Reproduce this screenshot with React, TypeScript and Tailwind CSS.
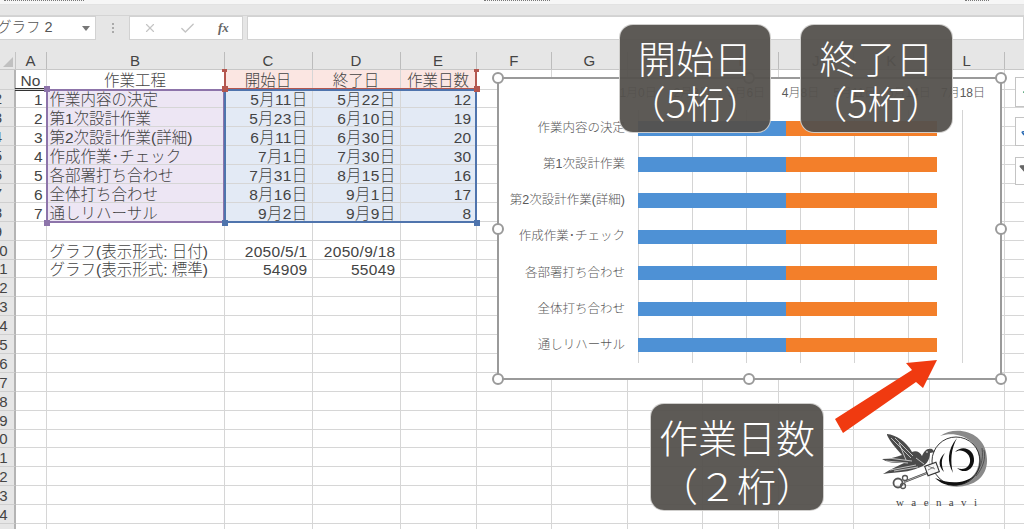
import React from 'react';
import { X, Check, Plus, Paintbrush, Filter } from 'lucide-react';

const colLetters = ['A', 'B', 'C', 'D', 'E', 'F', 'G', 'H', 'I', 'J', 'K', 'L', 'M'];

const rows: { no?: string; name?: string; start?: string; end?: string; days?: string }[] = [
  { no: '1', name: '作業内容の決定', start: '5月11日', end: '5月22日', days: '12' },
  { no: '2', name: '第1次設計作業', start: '5月23日', end: '6月10日', days: '19' },
  { no: '3', name: '第2次設計作業(詳細)', start: '6月11日', end: '6月30日', days: '20' },
  { no: '4', name: '作成作業･チェック', start: '7月1日', end: '7月30日', days: '30' },
  { no: '5', name: '各部署打ち合わせ', start: '7月31日', end: '8月15日', days: '16' },
  { no: '6', name: '全体打ち合わせ', start: '8月16日', end: '9月1日', days: '17' },
  { no: '7', name: '通しリハーサル', start: '9月2日', end: '9月9日', days: '8' },
  {},
  { name: 'グラフ(表示形式: 日付)', start: '2050/5/1', end: '2050/9/18' },
  { name: 'グラフ(表示形式: 標準)', start: '54909', end: '55049' },
];

const emptyRows = Array.from({ length: 14 }, (_, i) => i + 12);
const restCols = [0, 1, 2, 3, 4, 5, 6, 7];

const chartLabels = ['作業内容の決定', '第1次設計作業', '第2次設計作業(詳細)', '作成作業･チェック', '各部署打ち合わせ', '全体打ち合わせ', '通しリハーサル'];
const axisLabels = ['1月0日', '2月3日', '3月6日', '4月8日', '5月11日', '6月14日', '7月18日'];

const rowGrid = 'grid grid-rows-[minmax(0,1fr)] grid-cols-[15.5px_31px_178px_88px_88px_76px_repeat(8,75.5px)]';
const cell = 'min-h-0 border-r border-b border-[#d6d6d6] flex items-center whitespace-nowrap pt-[4px] leading-[16px]';

const RowHead = ({ n }: { n: number }) => (
  <div className="w-[15.5px] min-h-0 bg-[#e6e6e6] border-r-2 border-b border-r-[#b4b4b4] border-b-[#cfcfcf] overflow-hidden flex justify-end items-center pt-[2px] leading-[16px] text-[15px] text-[#444]">
    {n < 10 ? (
      <span className="w-[31px] shrink-0 text-center">{n === 1 ? '' : n}</span>
    ) : (
      <span className="pr-[6px]">{n % 10}</span>
    )}
  </div>
);

const Handle = ({ className }: { className: string }) => (
  <div className={`absolute w-[12px] h-[12px] rounded-full bg-white border-2 border-[#9a9a9a] -translate-x-1/2 -translate-y-1/2 ${className}`} />
);

const Caption = ({ className, lines, size }: { className: string; lines: string[]; size: string }) => (
  <div className={`absolute rounded-[14px] bg-[#54514d]/95 border border-white/70 text-white text-center font-light font-['Noto_Sans_CJK_JP',sans-serif] ${size} ${className}`}>
    {lines.map(l => (
      <div key={l}>{l}</div>
    ))}
  </div>
);

const Logo = () => (
  <svg className="absolute left-[880px] top-[428px]" width="115" height="66" viewBox="0 0 115 66">
    {/* 月 */}
    <path d="M60 8 C76 -3 106 3 107 31 C108 52 88 63 64 57 C84 60 100 48 99 30 C98 12 78 2 60 8 Z" fill="#8a8a8a" />
    <path d="M92 50 C100 42 104 32 102 20 M96 48 C103 40 106 30 104 22" stroke="#444" strokeWidth="0.8" fill="none" />
    <circle cx="76" cy="33" r="24" fill="none" stroke="#222" strokeWidth="0.9" />
    <path d="M55 50 C66 61 84 60 94 48 C84 56 68 56 55 50 Z" fill="#111" />
    {/* 中央の飾り */}
    <path d="M65 25 C58 31 58 38 64 44 C61 37 61 31 65 25 Z" fill="#111" />
    <path d="M77 10 C67 22 67 34 73 45 C70 33 71 21 77 10 Z" fill="#111" />
    <path d="M75 24 C83 16 95 22 94 33 C93 43 83 46 77 40 C85 43 91 38 90 31 C89 24 81 20 75 24 Z" fill="#111" />
    {/* 鳥 */}
    <path d="M7 6 C16 7 26 13 32 24 C36 22 40 24 42 28 C44 24 46 20 52 21 L55 24 L50 25 C50 32 46 38 38 40 C30 44 18 44 3 46 C11 41 18 38 24 35 C14 35 8 35 2 31 C10 31 16 29 22 27 C16 20 10 14 7 7 Z" fill="#4a4a4a" />
    <path d="M11 10 L31 30 M15 10 L33 28 M8 30 L32 33 M6 33 L28 35 M10 42 L36 37 M14 43 L38 39 M19 15 L26 32 M36 30 L44 36" stroke="#f2f2f2" strokeWidth="0.7" fill="none" />
    <circle cx="47" cy="24" r="0.8" fill="#fff" />
    {/* 鍵 */}
    <path d="M24 54 L52 43" stroke="#444" strokeWidth="2.2" />
    <path d="M24 54 L52 43" stroke="#eee" strokeWidth="0.6" />
    <rect x="46" y="36" width="12" height="10" fill="#f6f6f6" stroke="#333" strokeWidth="1.1" transform="rotate(-20 52 41)" />
    <path d="M48 38 L55 41 M48 42 L54 39" stroke="#555" strokeWidth="0.7" />
    <circle cx="18" cy="55" r="4.5" fill="none" stroke="#555" strokeWidth="1.8" />
    <circle cx="25" cy="50" r="2.5" fill="none" stroke="#555" strokeWidth="1.3" />
    <circle cx="23" cy="58" r="2.5" fill="none" stroke="#555" strokeWidth="1.3" />
  </svg>
);

export default function App() {
  return (
    <div className="relative w-[1024px] h-[529px] overflow-hidden bg-white text-[15.5px] font-light text-[#444] font-['Liberation_Sans','Noto_Sans_CJK_JP',sans-serif]">
      {/* リボン下端 */}
      <div className="h-[4px] bg-[#f6f6f6] flex gap-[10px] pl-[4px]">
        <span className="w-[80px] h-[1px] border-b border-dotted border-[#777]" />
        <span className="ml-[390px] w-[66px] h-[1px] border-b border-dotted border-[#777]" />
        <span className="ml-[405px] w-[24px] h-[1px] border-b border-dotted border-[#777]" />
      </div>

      {/* 数式バー */}
      <div className="h-[48px] bg-[#e6e6e6] border-t border-[#e2e2e2]">
        <div className="h-[11px] border-b border-[#d4d4d4]" />
        <div className="flex items-stretch h-[24px]">
          <div className="w-[97px] bg-white border border-[#d2d2d2] flex items-center justify-between pr-[5px] -ml-[1px] overflow-hidden">
            <span className="whitespace-nowrap -ml-[3px] text-[14.5px] text-[#555]">グラフ 2</span>
            <span className="w-0 h-0 border-x-[4px] border-t-[5px] border-x-transparent border-t-[#777]" />
          </div>
          <div className="w-[33px] flex flex-col items-center justify-center gap-[2px]">
            <span className="w-[2px] h-[2px] bg-[#aaa]" />
            <span className="w-[2px] h-[2px] bg-[#aaa]" />
            <span className="w-[2px] h-[2px] bg-[#aaa]" />
          </div>
          <div className="w-[114px] bg-white border border-[#d2d2d2] flex items-center pl-[13px] gap-[22px]">
            <X className="w-[14px] h-[14px] text-[#c4c4c4]" strokeWidth={2} />
            <Check className="w-[17px] h-[17px] text-[#c4c4c4]" strokeWidth={2} />
            <span className="italic font-bold text-[13px] text-[#666] font-['Liberation_Serif',serif]">fx</span>
          </div>
          <div className="ml-[4px] flex-1 bg-white border border-[#d2d2d2]" />
        </div>
      </div>

      {/* 列見出し */}
      <div className={`${rowGrid} h-[18px] bg-[#e6e6e6] border-b border-[#c8c8c8]`}>
        <div className="relative border-r border-[#c4c4c4]">
          <span className="absolute right-[2px] bottom-[2px] w-0 h-0 border-l-[10px] border-b-[10px] border-l-transparent border-b-[#c0c0c0]" />
        </div>
        {colLetters.map(c => (
          <div key={c} className="min-h-0 flex items-center justify-center border-r border-[#bcbcbc] leading-[16px] text-[15px] text-[#444]">
            {c}
          </div>
        ))}
      </div>

      {/* 表 */}
      <div className={`${rowGrid} h-[19.5px]`}>
        <RowHead n={1} />
        <div className={`${cell} justify-center`}>No</div>
        <div className={`${cell} justify-center`}>作業工程</div>
        <div className={`${cell} justify-center bg-[#fbe6e2]`}>開始日</div>
        <div className={`${cell} justify-center bg-[#fbe6e2]`}>終了日</div>
        <div className={`${cell} justify-center bg-[#fbe6e2]`}>作業日数</div>
        {restCols.map(c => (
          <div key={c} className={cell} />
        ))}
      </div>

      {rows.map((r, i) => {
        const inRange = i < 7;
        return (
          <div key={i} className={`${rowGrid} h-[18.9px]`}>
            <RowHead n={i + 2} />
            <div className={`${cell} justify-end pr-[3px]`}>{r.no}</div>
            <div className={`${cell} pl-[3px] ${inRange ? 'bg-[#ede6f4]' : ''}`}>{r.name}</div>
            <div className={`${cell} justify-end pr-[4px] tracking-[0.3px] ${inRange ? 'bg-[#e3eaf5]' : ''}`}>{r.start}</div>
            <div className={`${cell} justify-end pr-[4px] tracking-[0.3px] ${inRange ? 'bg-[#e3eaf5]' : ''}`}>{r.end}</div>
            <div className={`${cell} justify-end pr-[4px] tracking-[0.3px] ${inRange ? 'bg-[#e3eaf5]' : ''}`}>{r.days}</div>
            {restCols.map(c => (
              <div key={c} className={cell} />
            ))}
          </div>
        );
      })}

      {emptyRows.map(n => (
        <div key={n} className={`${rowGrid} h-[18.9px]`}>
          <RowHead n={n} />
          {colLetters.map(c => (
            <div key={c} className={cell} />
          ))}
        </div>
      ))}

      {/* No の二重下線 */}
      <div className="absolute left-[15px] top-[88px] w-[30px] h-[3px] border-y border-[#333]" />

      {/* 参照範囲の枠 */}
      <div className="absolute left-[224px] top-[70px] w-[253px] h-[20px] border-x-2 border-b-2 border-[#b4574f]" />
      <div className="absolute left-[46px] top-[89px] w-[179px] h-[134px] border-2 border-[#8d74aa]" />
      <div className="absolute left-[224px] top-[89px] w-[253px] h-[134px] border-2 border-[#4f74ad]" />
      <span className="absolute left-[44px] top-[86px] w-[6px] h-[6px] bg-[#8d74aa]" />
      <span className="absolute left-[44px] top-[220px] w-[6px] h-[6px] bg-[#8d74aa]" />
      <span className="absolute left-[222px] top-[86px] w-[6px] h-[6px] bg-[#b4574f]" />
      <span className="absolute left-[474px] top-[86px] w-[6px] h-[6px] bg-[#b4574f]" />
      <span className="absolute left-[222px] top-[220px] w-[6px] h-[6px] bg-[#4f74ad]" />
      <span className="absolute left-[474px] top-[220px] w-[6px] h-[6px] bg-[#4f74ad]" />
      <span className="absolute left-[222px] top-[69px] w-[5px] h-[3px] bg-[#b4574f]" />
      <span className="absolute left-[474px] top-[69px] w-[5px] h-[3px] bg-[#b4574f]" />

      {/* グラフ */}
      <div className="absolute left-[497px] top-[77px] w-[505px] h-[303px] bg-white border-2 border-[#9a9a9a] text-[#595959] text-[12.5px]">
        <div className="absolute left-[139px] top-[31px] w-[325px] h-[253px] flex border-r border-[#d4d4d4]">
          {[0, 1, 2, 3, 4, 5].map(i => (
            <div key={i} className="flex-1 border-l border-[#d4d4d4]" />
          ))}
        </div>
        <div className="relative h-[31.5px] pt-[7px] pl-[112px] flex leading-[14px] text-[12px]">
          {axisLabels.map(l => (
            <div key={l} className="w-[54.17px] shrink-0 text-center whitespace-nowrap">
              {l}
            </div>
          ))}
        </div>
        {chartLabels.map(l => (
          <div key={l} className="relative h-[36.1px] flex items-center">
            <div className="w-[126px] text-right whitespace-nowrap">{l}</div>
            <div className="ml-[13px] flex h-[14.5px]">
              <div className="w-[148px] bg-[#4e91d5]" />
              <div className="w-[151px] bg-[#f37f2a]" />
            </div>
          </div>
        ))}
      </div>

      <Handle className="left-[498px] top-[78px]" />
      <Handle className="left-[749px] top-[78px]" />
      <Handle className="left-[1001px] top-[78px]" />
      <Handle className="left-[498px] top-[229px]" />
      <Handle className="left-[1001px] top-[229px]" />
      <Handle className="left-[498px] top-[379px]" />
      <Handle className="left-[749px] top-[379px]" />
      <Handle className="left-[1001px] top-[379px]" />

      {/* グラフ右のボタン */}
      <div className="absolute left-[1015px] top-[77px] w-[24px] h-[30px] bg-white border border-[#c4c4c4] flex items-center pl-[5px]">
        <Plus className="w-[14px] h-[14px] shrink-0 text-[#2f8f5b]" strokeWidth={3} />
      </div>
      <div className="absolute left-[1015px] top-[117px] w-[24px] h-[29px] bg-white border border-[#c4c4c4] flex items-center pl-[5px]">
        <Paintbrush className="w-[14px] h-[14px] shrink-0 text-[#2d6db5]" strokeWidth={2.5} />
      </div>
      <div className="absolute left-[1015px] top-[157px] w-[24px] h-[28px] bg-white border border-[#c4c4c4] flex items-center pl-[3px]">
        <Filter className="w-[14px] h-[14px] shrink-0 text-[#666] fill-[#666]" />
      </div>

      {/* 説明ラベル */}
      <Caption className="left-[619px] top-[24px] w-[152px] h-[109px] pt-[9px] leading-[45px]" size="text-[38px]" lines={['開始日', '（5桁）']} />
      <Caption className="left-[800px] top-[24px] w-[153px] h-[109px] pt-[9px] leading-[45px]" size="text-[38px]" lines={['終了日', '（5桁）']} />
      <Caption className="left-[650px] top-[403px] w-[174px] h-[108px] pt-[8px] leading-[48px]" size="text-[39px]" lines={['作業日数', '（２桁）']} />

      {/* 矢印 */}
      <svg className="absolute left-[830px] top-[355px]" width="112" height="84" viewBox="0 0 112 84">
        <polygon points="5,64 13,78 86,27 93,33 107,5 76,8 82,15" fill="#f03a10" />
      </svg>

      <Logo />
      <div className="absolute left-[896px] top-[495px] text-[11px] leading-[14px] tracking-[7.4px] text-[#444] font-['Liberation_Serif',serif]">waenavi</div>
    </div>
  );
}
